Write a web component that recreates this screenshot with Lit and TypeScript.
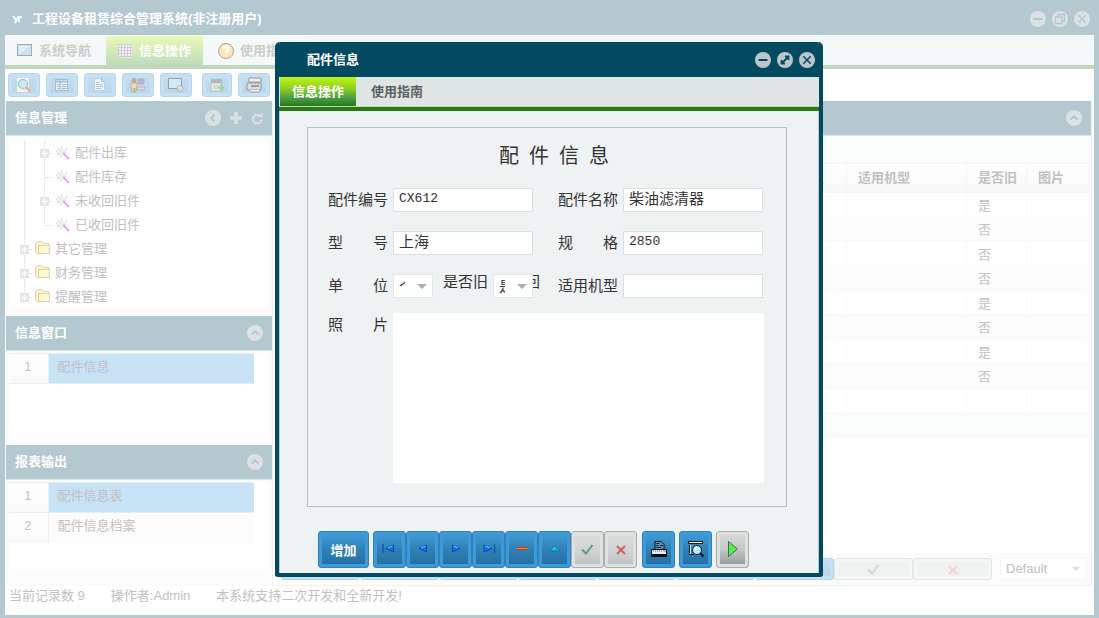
import { LitElement, html, svg, css, nothing } from "lit";
import { customElement } from "lit/decorators.js";
import { classMap } from "lit/directives/class-map.js";

const icon = (w: number, h: number, body: unknown) =>
  html`<svg width=${w} height=${h} viewBox="0 0 ${w} ${h}" aria-hidden="true">${body}</svg>`;

/* Round window buttons: a disc with a cut-out glyph */
const disc = (kind: string) => {
  const marks: Record<string, unknown> = {
    minus: svg`<path d="M3.5 8h9" stroke-width="2"/>`,
    restore: svg`<path d="M6 5.5V3.5h6.5v6.5h-2M3.5 6h6.5v6.5h-6.5z" stroke-width="1.3"/>`,
    expand: svg`<path d="M5.5 10.5l5-5M8 4.5h3.5V8M4.5 8v3.500H8" stroke-width="1.8"/>`,
    close: svg`<path d="M4.300 4.300l7.400 7.400M11.700 4.300l-7.400 7.400" stroke-width="1.500"/>`,
    up: svg`<path d="M4.500 9.500L8 6.300l3.500 3.200" stroke-width="2"/>`,
    left: svg`<path d="M9.500 4.500L6.300 8l3.200 3.500" stroke-width="2"/>`,
  };
  return icon(16, 16, svg`<circle cx="8" cy="8" r="8" fill="currentColor"/><g class="cut" fill="none">${marks[kind]}</g>`);
};

const art: Record<string, unknown> = {
  logo: svg`<path d="M3 13C0 12 0 8 3 7 4 3 10 2 12 6c4 0 4 6 1 7z" fill="#a6cde4"/><path d="M3 5l3 4M9 5l-4 7M9 11V6h3" stroke="#fff" stroke-width="2" fill="none"/>`,
  screen: svg`<rect x=".5" y="1.500" width="14" height="11" fill="#cbe3ee" stroke="#a3a9ae"/><path d="M2 11V3h11z" fill="#e0f1f7"/>`,
  grid: svg`<path d="M1 1h14v14H1z" fill="#f3f0f6"/><path d="M1 1.500h14M1 4.500h14M1 7.500h14M1 10.500h14M1 13.500h14M1.500 1v14M4.500 1v14M7.500 1v14M10.500 1v14M13.500 1v14" stroke="#cdccd4"/>`,
  help: svg`<circle cx="8" cy="8" r="7.500" fill="#fbe8b4" stroke="#b9a094"/><path d="M5.500 6C5.500 3 11 3 10.500 6 10 8 8 8 8 10M8 11.500v1.500" stroke="#fff" stroke-width="2" fill="none"/>`,
  find: svg`<path d="M1 1h12v14H1z" fill="#f0f0ec"/><circle cx="7" cy="7" r="4.500" fill="#c8ecf8" stroke="#a5b4c0"/><path d="M10.500 10.500l4 4" stroke="#e0b49c" stroke-width="3"/>`,
  sheet: svg`<rect x="1.500" y="2.500" width="12" height="11" fill="#e7f0f3" stroke="#a9bccb"/><path d="M2 4.500h11" stroke="#a9c4d8" stroke-width="2"/><path d="M6 5v8" stroke="#9eb0bd"/><path d="M3 7.500h2M3 9.500h2M3 11.500h2M7.500 7.500h5M7.500 9.500h5M7.500 11.500h5" stroke="#acbfcb"/>`,
  doc: svg`<path d="M2.500 1.500h7l3 3v9h-10z" fill="#edf6fb" stroke="#bcd1e1"/><path d="M9.500 1.500v3h3" fill="none" stroke="#a3b9cb"/><path d="M4 5.500h4M4 7.500h7M4 9.500h7M4 11.500h5" stroke="#abc6dc"/>`,
  users: svg`<circle cx="4" cy="3.500" r="2.500" fill="#c9a78c"/><path d="M1 6h6v5H6v4H4.500v-4H4v4H2v-4H1z" fill="#f0dcb0" stroke="#b09c86" stroke-width=".6"/><path d="M8 2h6v5H8z" fill="#b3b0ea" stroke="#b8b8b8"/><path d="M7 10h8v3H7z" fill="#dcdcd6" stroke="#a6a8a8" stroke-width=".6"/>`,
  view: svg`<rect x=".5" y="1.500" width="13" height="10" fill="#d3e8f4" stroke="#959fa6"/><circle cx="12" cy="11.500" r="3" fill="#d6efdf" stroke="#b9a9d8"/><path d="M10 13.500l3-2" stroke="#e7ce9d"/>`,
  addRow: svg`<path d="M2 2h11v4H2z" fill="#b0b8ba"/><path d="M2 6h11v8H2z" fill="#eceee9" stroke="#a8afaf" stroke-width=".6"/><path d="M4 9h6M4 11h6" stroke="#b8bcbc"/><path d="M12 7.500v6M9 10.500h6" stroke="#9fd1a2" stroke-width="2"/>`,
  fax: svg`<path d="M3 1h12v4H3z" fill="#efefef" stroke="#94989b"/><path d="M1 6h14v7H1z" fill="#dedfdf" stroke="#909395"/><path d="M5 8h8v2H5z" fill="#999c9e"/><path d="M3 13l2 2h8l1-2" fill="#f3f3f3" stroke="#a3a3a3"/>`,
  leaf: svg`<path d="M2 6l5-4 2 3 3-1-1 4-4 4-2-2-2 1z" fill="#f0f0f0"/><path d="M1 6h1M3 4h1M7 1h1M2 9h2M5 7h1M11 4h1M5 12h1M9 8h1M6 3h1" stroke="#c4c4c4"/><path d="M8 8l6 6" stroke="#dba8f2" stroke-width="1.800"/>`,
  folder: svg`<path d="M.5 11V2.500L3 .5h4l2 2h4.500V12.500H2z" fill="#fff4cf" stroke="#ddcfae"/><path d="M3.500 4.500h11v8h-11z" fill="#fff6d4" stroke="#e2cf9f"/>`,
  first: svg`<path d="M1 3v9" stroke="#0b56b4" stroke-width="1.400"/><path d="M11.500 4v7L4 7.500z" fill="#0873e8" stroke="#064ca4"/><path d="M10.500 5L6 7" stroke="#84c4ff"/>`,
  prev: svg`<path d="M11.500 4v7L4 7.500z" fill="#0873e8" stroke="#064ca4"/><path d="M10.500 5L6 7" stroke="#84c4ff"/>`,
  next: svg`<path d="M4.500 4v7L12 7.500z" fill="#0873e8" stroke="#064ca4"/><path d="M5.500 5L10 7" stroke="#84c4ff"/>`,
  last: svg`<path d="M3 4v7l8-3.500z" fill="#0873e8" stroke="#064ca4"/><path d="M4 5L9 7" stroke="#84c4ff"/><path d="M13.500 3v9" stroke="#0b56b4" stroke-width="1.400"/>`,
  remove: svg`<path d="M3 6h10v3H3z" fill="#d43510"/><path d="M3 7.500h10" stroke="#ff8a2a"/>`,
  edit: svg`<path d="M3 10l5-5 5 5z" fill="#09b6cf" stroke="#087d99" stroke-width=".8"/><path d="M6 8.500l2-2" stroke="#8ff0fa"/>`,
  check: svg`<path d="M2 8.500l4 4L12.500 4" fill="none" stroke="currentColor" stroke-width="2"/>`,
  cross: svg`<path d="M4 5l8 8M12 5l-8 8" fill="none" stroke="currentColor" stroke-width="2"/>`,
  print: svg`<path d="M4 8V.5h6l3 3V8" fill="#5b9bc7" stroke="#0a0f14"/><path d="M5.500 2.500h3M5.500 4.500h2M9 4.500h3M5.500 6.500h5" stroke="#0a0f14"/><path d="M.500 8.500h15v5H.500z" fill="#e4ecf4" stroke="#0a0f14"/><path d="M2 10h9" stroke="#5870a8" stroke-dasharray="1 1"/><path d="M12.500 10h2" stroke="#e02020"/><path d="M0 15h16" stroke="#0a0f14" stroke-width="2"/>`,
  preview: svg`<path d="M0 1.500h15" stroke="#2a1a14" stroke-width="3"/><path d="M1 1.500h13" stroke="#eceff2"/><path d="M2.500 4v9" stroke="#d9e8f2"/><path d="M1 13.500h5M1.500 4v8" stroke="#121a22"/><circle cx="9" cy="9" r="4.500" fill="#bfe9fb" stroke="#16222c"/><path d="M7 8l2-2" stroke="#fff" stroke-width="2"/><path d="M12.500 12.500l3 3" stroke="#0a1a2a" stroke-width="2.500"/>`,
  play: svg`<path d="M3.500.500v15L12.500 8z" fill="#5ce85c" stroke="#3a7a40"/>`,
  plus: svg`<path d="M6 1v12M0 7h12" stroke="currentColor" stroke-width="3.500"/>`,
  refresh: svg`<path d="M10.500 8.500a4.300 4.300 0 1 1-2-4" fill="none" stroke="currentColor" stroke-width="2.200"/><path d="M6.500 5.800L11.500 6.500V1.500z" fill="currentColor"/>`,
};
const pic = (name: string, w = 16, h = w) => icon(w, h, art[name]);

const toolbar = [
  ["find", "查询"], ["sheet", "列表"], ["doc", "文档"], ["users", "用户"], ["view", "浏览"], ["addRow", "导入"], ["fax", "打印"],
];
const tree = [
  { level: 2, name: "配件出库", open: true },
  { level: 2, name: "配件库存", open: false },
  { level: 2, name: "未收回旧件", open: true },
  { level: 2, name: "已收回旧件", open: false, end: true },
  { level: 1, name: "其它管理", open: true },
  { level: 1, name: "财务管理", open: true },
  { level: 1, name: "提醒管理", open: true, end: true },
];
const used = ["是", "否", "否", "否", "是", "否", "是", "否", "", ""];
const navigator = [
  ["first", "首条"], ["prev", "上一条"], ["next", "下一条"], ["last", "末条"], ["remove", "删除"], ["edit", "编辑"],
];

const branch = (toggle: boolean, end: boolean) => icon(20, 24, svg`
  <path d="M10.500 0V${end ? 12 : 24}" class="dots"/>
  <path d="M11 12.500h8" class="dots"/>
  ${toggle ? svg`<path d="M6 8h9v9H6z" fill="#e4e6e6"/><path d="M10.500 9.500v6M7.500 12.500h6" stroke="#fff" stroke-width="1.500"/>` : nothing}`);

@customElement("app-root")
export class AppRoot extends LitElement {
  static styles = css`
    :host {
      display: block;
      font: 13px/20px "Liberation Sans", "Noto Sans CJK SC", sans-serif;
      color: #c1c1c1;
    }
    * { box-sizing: border-box; }
    svg { display: block; flex: none; }
    button, input, select { font: inherit; color: inherit; margin: 0; }
    button { padding: 0; border: 0; background: none; display: flex; align-items: center; justify-content: center; }
    h1, h2, h3 { margin: 0; font-size: 13px; }
    .window {
      position: relative; min-height: 100vh; display: flex; flex-direction: column;
      border: solid #b4c8cf; border-width: 0 5px 4px; background: #fff; overflow: hidden;
    }
    .titlebar {
      height: 35px; padding: 2px 4px 0 5px; display: flex; align-items: center; gap: 6px;
      background: #b4c8cf; color: #fff; flex: none;
    }
    .grow { flex: 1; }
    .discs { display: flex; gap: 6px; color: #dce2e4; }
    .cut { stroke: #b4c8cf; }
    .tabs { display: flex; height: 30px; background: #f5f8f8; flex: none; padding-left: 1px; }
    .tab { gap: 6px; font-weight: bold; color: #cacdcd; padding: 0 15px 0 11px; border-top: 1px solid #fafcfc; }
    .tab.on { color: #fff; background: linear-gradient(#e8f9b9, #d5eab9 50%, #bedcbd); padding: 0 12px 0 11px; }
    .tab.on + .tab { padding-left: 15px; }
    .stripe { height: 4px; background: #c0d6bb; flex: none; }
    .tools { display: flex; gap: 6px; padding: 4px 3px; height: 32px; flex: none; }
    .tool {
      width: 32px; height: 24px; border: 1px solid #b7d6ed; border-radius: 3px;
      background: linear-gradient(#c6e0f4, #bbd5e6); box-shadow: inset 0 0 0 3px #c5e1f6;
    }
    .tool.gap { margin-left: 4px; width: 30px; }
    .main { flex: 1; display: flex; gap: 4px; padding: 0 2px 0 1px; }
    .side { width: 267px; display: flex; flex-direction: column; background: #fafcfb; flex: none; border-right: 1px solid #e9f0f1; }
    .panelhead {
      height: 35px; flex: none; display: flex; align-items: center; gap: 8px; padding: 0 9px;
      background: #b4c8cf; color: #dce2e4; border-bottom: 1px solid #d9e4e7;
    }
    .panelhead h2 { color: #fff; }
    .panelhead .icons { display: flex; align-items: center; gap: 9px; }
    .tree { flex: 1; margin: 3px 4px 7px 3px; background: #fff; padding: 2px 0 0 5px; list-style: none; }
    .node { display: flex; align-items: center; height: 24px; }
    .node a { display: flex; align-items: center; gap: 4px; color: inherit; text-decoration: none; padding-left: 1px; }
    .dots { stroke: #d8dada; stroke-dasharray: 1 1; fill: none; }
    .list { margin: 2px 4px 5px 3px; background: #fff; height: 87px; flex: none; }
    .list.tall { margin-bottom: 17px; }
    .rows { border-collapse: collapse; width: 245px; }
    .rows td { height: 30px; padding: 0 0 4px 9px; background: #fcfcfc; }
    .rows td:first-child { width: 39px; padding: 0 1px 4px 0; text-align: center; background: linear-gradient(#fff, #f8f8f8); border-right: 1px solid #e6f0f8; }
    .rows .on td { border-top: 1px solid #e0effa; border-bottom: 1px solid #e0effa; }
    .rows .on td:last-child { background: #c8e2f6; }
    .data { flex: 1; min-width: 0; display: flex; flex-direction: column; background: #fafcfb; border-right: 1px solid #eef2f3; }
    .sheet { flex: 1; margin: 27px 2px 2px 0; background: #fff; }
    .grid { width: 100%; border-collapse: separate; border-spacing: 0; table-layout: fixed; }
    .grid th { height: 30px; text-align: left; font-size: 13px; padding: 0 11px; background: linear-gradient(#fff, #f8f8f8); border: solid #f4f5f5; border-width: 1px 1px 1px 0; white-space: nowrap; }
    .grid td { height: 24px; padding: 2px 11px 0; border: solid #fafafa; border-width: 0 1px 1px 0; }
    .grid tr:nth-child(even) td { background: #fcfcfc; height: 25px; }
    .grid tbody tr:last-child td { background: #fafcfb; }
    .grid .w60 { width: 60px; }
    .grid .w120 { width: 120px; }
    .grid .w62 { width: 62px; }
    .pager { display: flex; height: 31px; padding: 3px 4px 5px; flex: none; border-bottom: 1px solid #eff2f2; }
    .page { width: 79px; border: 1px solid #b7d6ed; border-radius: 3px; background: linear-gradient(#c6e0f4, #bbd5e6); box-shadow: inset 0 0 0 3px #c5e1f6; }
    .page.off { background: #f0f2f1; border-color: #e4e6e6; box-shadow: inset 0 0 0 3px #f5f6f6; color: #c8ddcf; }
    .page.no { color: #f5d0cc; }
    .pick {
      appearance: none; border: 1px solid #f7f8f8; width: 86px; margin-left: 8px; padding: 0 5px; border-radius: 0;
      background: #fff;
    }
    .pickbox { position: relative; display: flex; }
    .caret { position: absolute; right: 6px; top: 9px; border: solid transparent; border-width: 4px 4px 0; border-top-color: #dcdede; }
    .status { height: 29px; display: flex; gap: 26px; padding: 0 4px; flex: none; border-bottom: 3px solid #fafbfb; }

    .layer { position: absolute; inset: 0 -4px -3px -5px; display: flex; align-items: center; justify-content: center; }
    .dialog {
      width: 548px; background: #eef2f3; border: solid #034a61; border-width: 0 4px 4px;
      border-radius: 5px 5px 3px 3px; color: #333; overflow: hidden;
    }
    .dialog .titlebar { background: #034a61; padding: 2px 4px 0 28px; }
    .dialog .discs { color: #bcc6c9; }
    .dialog .cut { stroke: #034a61; }
    .dialog .tabs { background: #dfe5e5; height: 29px; }
    .dialog .tab { color: #5c6262; padding: 2px 15px 0; border: 0; }
    .dialog .tab.on { color: #fff; padding: 2px 12px 0; background: linear-gradient(#bff613, #8fce22 40%, #4ea043 70%, #28791f); }
    .dialog .stripe { background: #257b18; height: 5px; border-top: 1px solid #c8dca0; }
    .body { border: solid #b9cbd0; border-width: 0 1px; padding: 16px 31px 5px 27px; }
    .card { border: 1px solid #babebf; margin: 0; padding: 0 23px 23px 20px; }
    .card h3 { font: 20px/54px "Noto Sans CJK SC", sans-serif; text-align: center; padding: 0 0 6px 17px; }
    .form { display: grid; grid-template-columns: 60px 140px 60px 140px; column-gap: 5px; row-gap: 19px; font-size: 15px; line-height: 24px; }
    .form .cap { text-align: justify; text-align-last: justify; }
    .form .second { margin-left: 20px; margin-right: -20px; }
    .form .field.second { width: 140px; }
    .field { width: 140px; height: 24px; border: 1px solid #dcdfdf; background: #fff; padding: 0 5px 2px; border-radius: 0; }
    .field.latin { font-family: "Liberation Mono", monospace; font-size: 13px; }
    .row { position: relative; display: flex; align-items: flex-start; gap: 5px; }
    .row .mini { line-height: 16px; margin-left: 5px; white-space: nowrap; }
    .row .back { position: absolute; left: 102px; line-height: 16px; white-space: nowrap; }
    .combo { position: relative; width: 40px; height: 24px; flex: none; }
    .combo select { appearance: none; width: 40px; height: 24px; border: 1px solid #e4e7e7; border-radius: 0; background: #fff; padding: 0 27px 0 5px; }
    .combo .caret { right: 6px; top: 10px; border-width: 5px 5px 0; border-top-color: #a9adad; }
    .photo { grid-column: 2 / 5; height: 170px; background: #fff; width: 371px; margin-top: -4px; }
    .photocap { margin-top: -4px; }
    .actions { display: flex; margin: 24px 0 0 11px; }
    .act {
      width: 33px; height: 37px; border: 1px solid #3380b8; border-radius: 3px; color: #fff; flex: none;
      background: linear-gradient(#429fda, #2f80b6 50%, #256d9e); box-shadow: inset 0 0 0 3px #3f9bd8;
    }
    .act.add { width: 51px; margin-right: 4px; font-weight: bold; padding-top: 4px; }
    .act.grey { background: linear-gradient(#dcdedf, #cfd1d2 60%, #b9bcbc); border-color: #a9adad; box-shadow: inset 0 0 0 3px #dfe1e1; color: #609a78; }
    .act.red { color: #d4605a; }
    .act.apart { margin-left: 4px; }
    .act.first { margin-left: 5px; }
    .act.run { background: linear-gradient(#d9dbdc, #c5c8c8 50%, #8f9494); }
  `;

  render() {
    return html`
      <div class="window">
        <header class="titlebar">
          ${pic("logo")}
          <h1 class="grow">工程设备租赁综合管理系统(非注册用户)</h1>
          <div class="discs">
            <button aria-label="最小化">${disc("minus")}</button>
            <button aria-label="还原">${disc("restore")}</button>
            <button aria-label="关闭">${disc("close")}</button>
          </div>
        </header>
        <nav class="tabs">
          <button class="tab">${pic("screen")}系统导航</button>
          <button class="tab on">${pic("grid")}信息操作</button>
          <button class="tab">${pic("help")}使用指南</button>
        </nav>
        <div class="stripe"></div>
        <div class="tools">
          ${toolbar.map(([id, label]) => html`<button class=${classMap({ tool: true, gap: id === "addRow" })} aria-label=${label}>${pic(id)}</button>`)}
        </div>
        <main class="main">
          <aside class="side">
            <div class="panelhead">
              <h2 class="grow">信息管理</h2>
              <div class="icons">
                <button aria-label="收起">${disc("left")}</button>
                <button aria-label="新增">${pic("plus", 12, 14)}</button>
                <button aria-label="刷新">${pic("refresh", 12, 14)}</button>
              </div>
            </div>
            <div class="tree" role="tree">
              ${tree.map((n) => html`
                <div class="node" role="treeitem">
                  ${n.level === 2 ? icon(20, 24, svg`<path d="M10.500 0V24" class="dots"/>`) : nothing}
                  ${branch(n.open, !!n.end)}
                  <a href="#">${pic(n.level === 2 ? "leaf" : "folder")}${n.name}</a>
                </div>`)}
            </div>
            ${this.panel("信息窗口", ["配件信息"], false)}
            ${this.panel("报表输出", ["配件信息表", "配件信息档案"], true)}
          </aside>
          <section class="data">
            <div class="panelhead"><span class="grow"></span><button aria-label="折叠">${disc("up")}</button></div>
            <div class="sheet">
              <table class="grid">
                <thead>
                  <tr><th></th><th class="w60">单位</th><th class="w120">适用机型</th><th class="w60">是否旧</th><th class="w62">图片</th></tr>
                </thead>
                <tbody>
                  ${used.map((v) => html`<tr><td></td><td></td><td></td><td>${v}</td><td></td></tr>`)}
                </tbody>
              </table>
            </div>
            <div class="pager">
              ${navigator.map(([, label]) => html`<button class="page" aria-label=${label}></button>`)}
              <button class="page" aria-label="刷新"></button>
              <button class="page off" aria-label="确定">${pic("check")}</button>
              <button class="page off no" aria-label="取消">${pic("cross")}</button>
              <div class="pickbox">
                <select class="pick" aria-label="主题"><option>Default</option></select>
                <span class="caret"></span>
              </div>
            </div>
          </section>
        </main>
        <footer class="status">
          <span>当前记录数 9</span><span>操作者:Admin</span><span>本系统支持二次开发和全新开发!</span>
        </footer>
        <div class="layer">${this.dialog()}</div>
      </div>`;
  }

  private panel(title: string, items: string[], tall: boolean) {
    return html`
      <div class="panelhead"><h2 class="grow">${title}</h2><button aria-label="折叠">${disc("up")}</button></div>
      <div class=${classMap({ list: true, tall })}>
        <table class="rows">
          ${items.map((t, i) => html`<tr class=${i === 0 ? "on" : ""}><td>${i + 1}</td><td>${t}</td></tr>`)}
        </table>
      </div>`;
  }

  private dialog() {
    return html`
      <section class="dialog" role="dialog" aria-labelledby="dlg">
        <header class="titlebar">
          <h2 id="dlg" class="grow">配件信息</h2>
          <div class="discs">
            <button aria-label="最小化">${disc("minus")}</button>
            <button aria-label="最大化">${disc("expand")}</button>
            <button aria-label="关闭">${disc("close")}</button>
          </div>
        </header>
        <nav class="tabs"><button class="tab on">信息操作</button><button class="tab">使用指南</button></nav>
        <div class="stripe"></div>
        <div class="body">
          <div class="card">
            <h3>配&ensp;件&ensp;信&ensp;息</h3>
            <form class="form">
              <label class="cap" for="code">配件编号</label><input class="field latin" id="code" value="CX612">
              <label class="cap second" for="name">配件名称</label><input class="field second" id="name" value="柴油滤清器">
              <label class="cap" for="model">型 号</label><input class="field" id="model" value="上海">
              <label class="cap second" for="spec">规 格</label><input class="field latin second" id="spec" value="2850">
              <label class="cap" for="unit">单 位</label>
              <div class="row">
                <div class="combo"><select id="unit"><option>个</option></select><span class="caret"></span></div>
                <label class="mini" for="old">是否旧</label>
                <span class="back">待收回</span>
                <div class="combo"><select id="old"><option>是</option></select><span class="caret"></span></div>
              </div>
              <label class="cap second" for="fit">适用机型</label><input class="field second" id="fit" value="">
              <span class="cap photocap">照 片</span>
              <div class="photo"></div>
            </form>
          </div>
          <div class="actions">
            <button class="act add">增加</button>
            ${navigator.map(([id, label]) => html`<button class="act" aria-label=${label}>${pic(id)}</button>`)}
            <button class="act grey" aria-label="确定">${pic("check")}</button>
            <button class="act grey red" aria-label="取消">${pic("cross")}</button>
            <button class="act first" aria-label="打印">${pic("print")}</button>
            <button class="act apart" aria-label="预览">${pic("preview")}</button>
            <button class="act grey run apart" aria-label="运行">${pic("play")}</button>
          </div>
        </div>
      </section>`;
  }
}
